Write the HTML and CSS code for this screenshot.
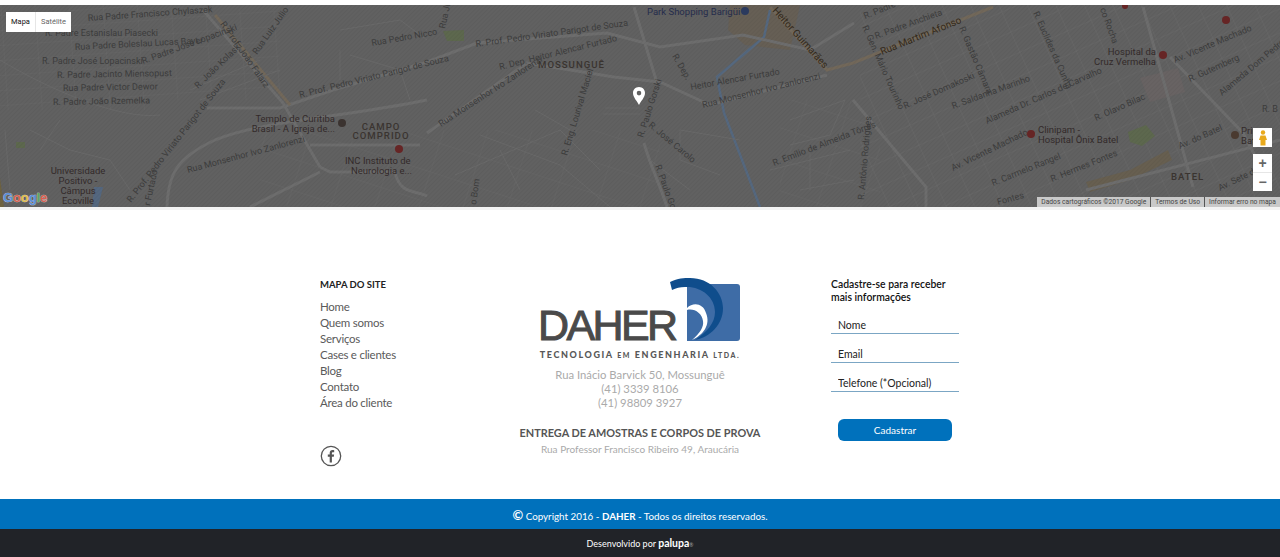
FILE: index.html
```html
<!DOCTYPE html>
<html lang="pt-BR">
<head>
  <meta charset="UTF-8" />
  <meta name="viewport" content="width=device-width, initial-scale=1.0"/>
  <title>Daher Tecnologia em Engenharia</title>
  <link rel="stylesheet" href="styles.css">
</head>
<body>
  <section class="map">
    <svg class="map-canvas" viewBox="0 5 1280 202" width="1280" height="202">
      <defs>
        <pattern id="grid-right" width="26" height="22" patternUnits="userSpaceOnUse" patternTransform="rotate(-24)">
          <path d="M0 0H26M0 0V22" stroke="#6a6a6a" fill="none"/>
        </pattern>
        <pattern id="grid-left" width="34" height="15" patternUnits="userSpaceOnUse" patternTransform="rotate(-4)">
          <path d="M0 0H34M0 0V15" stroke="#686868" fill="none"/>
        </pattern>
        <pattern id="grid-mid" width="42" height="30" patternUnits="userSpaceOnUse" patternTransform="rotate(18)">
          <path d="M0 0H42M0 0V30" stroke="#676767" fill="none"/>
        </pattern>
        <pattern id="hatch" width="3" height="3" patternUnits="userSpaceOnUse" patternTransform="rotate(-45)">
          <rect width="3" height="1" fill="#000" opacity="0.04"/>
        </pattern>
      </defs>
      <rect x="0" y="5" width="1280" height="202" fill="#616161"/>
      <rect x="0" y="5" width="150" height="105" fill="url(#grid-left)"/>
      <rect x="150" y="10" width="130" height="90" fill="url(#grid-left)"/>
      <rect x="260" y="130" width="400" height="77" fill="url(#grid-mid)"/>
      <rect x="780" y="100" width="100" height="107" fill="url(#grid-mid)"/>
      <rect x="860" y="5" width="420" height="202" fill="url(#grid-right)"/>

      <path d="M730 5H800L790 50L745 45L728 30Z" fill="#665f55"/>
      <path d="M1140 78L1178 68L1185 92L1150 102Z" fill="#686363"/>
      <path d="M1086 182L1130 170L1168 150L1172 160L1130 180L1090 192Z" fill="#675f50"/>
      <path d="M1128 132L1146 125L1155 136L1142 146L1130 142Z" fill="#5d684e"/>
      <path d="M443 31L464 30L464 41L447 41Z" fill="#5d684e"/>
      <rect x="16" y="142" width="9" height="6" fill="#5d684e"/>
      <path d="M0 178L4 207H0Z" fill="#6e6240"/>
      <path d="M94 187H103L98 207H92Z" fill="#54677f"/>

      <path d="M770 10L764 37L717 77L724 113L760 207" fill="none" stroke="#55687f" stroke-width="2.500"/>

      <g fill="none" stroke="#6d6d6d" stroke-width="3">
        <path d="M203 10L283 103L320 167"/>
        <path d="M167 207C168 175 176 158 215 140C265 120 340 118 427 100"/>
        <path d="M207 108H280L333 90L427 62L477 43L607 33L660 47L743 35L810 50L854 23"/>
        <path d="M427 133L527 63L614 77L660 82L710 105L827 75"/>
        <path d="M634 7L657 83"/>
        <path d="M644 143C650 165 660 185 667 207"/>
        <path d="M853 100L926 187V207"/>
        <path d="M1143 7L1193 187"/>
        <path d="M1170 57L1243 133L1265 175"/>
        <path d="M1086 190L1280 140"/>
        <path d="M310 145H420M320 167L330 172H395M395 172C400 195 415 190 427 196"/>
        <path d="M250 207L320 172"/>
      </g>
      <g fill="none" stroke="#72685a" stroke-width="3">
        <path d="M215 15L290 105"/>
        <path d="M770 7L827 70L853 63L993 7"/>
      </g>
      <g fill="none" stroke="#696969" stroke-width="1">
        <path d="M480 135L560 165L610 207M500 150L520 190M455 175L560 130L600 170M535 110L570 130"/>
        <path d="M605 108H640M603 114H640M650 160L690 190M680 130L740 140M680 130V160L720 175"/>
        <path d="M790 120L845 100L830 135L790 145M770 170L850 150M800 190L854 180M810 150V190"/>
        <path d="M340 30L400 20L427 40M340 50V80M350 55L400 70L410 100"/>
        <path d="M30 130L70 150L110 160L130 190M5 130L10 190M60 120L40 150"/>
        <path d="M0 60C50 90 120 120 160 115M190 90L260 60M200 100L280 70"/>
      </g>
      <rect x="0" y="5" width="1280" height="202" fill="url(#hatch)"/>

      <g class="street">
        <text x="88" y="21" transform="rotate(-4 88 21)">Rua Padre Francisco Chylaszek</text>
        <text x="45" y="36">R. Padre Estanislau Piasecki</text>
        <text x="75" y="50" transform="rotate(-3 75 50)">Rua Padre Boleslau Lucas Bayer</text>
        <text x="42" y="64">R. Padre José Lopacinski</text>
        <text x="143" y="64" transform="rotate(-20 143 64)">R. Padre José Lopacinski</text>
        <text x="57" y="78" transform="rotate(-1 57 78)">R. Padre Jacinto Miensopust</text>
        <text x="63" y="91" transform="rotate(-1 63 91)">Rua Padre Victor Dewor</text>
        <text x="53" y="105" transform="rotate(-1 53 105)">R. Padre João Rzemelka</text>
        <text x="220" y="24" transform="rotate(55 220 24)">R. Prof. João Falarz</text>
        <text x="257" y="55" transform="rotate(-55 257 55)">Rua Luiz Julio</text>
        <text x="198" y="89" transform="rotate(-44 198 89)">R. João Kolaski</text>
        <text x="300" y="98" transform="rotate(-14 300 98)">R. Prof. Pedro Viriato Parigot de Souza</text>
        <text x="372" y="46" transform="rotate(-10 372 46)">Rua Pedro Nicco</text>
        <text x="188" y="173" transform="rotate(-15 188 173)">Rua Monsenhor Ivo Zanlorenzi</text>
        <text x="131" y="203" transform="rotate(-52 131 203)">R. Prof. Pedro Viriato Parigot de Souza</text>
        <text x="150" y="206" transform="rotate(-78 150 206)">r Furtado</text>
        <text x="445" y="29" transform="rotate(-78 445 29)">Rua Ju</text>
        <text x="476" y="47" transform="rotate(-8 476 47)">R. Prof. Pedro Viriato Parigot de Souza</text>
        <text x="500" y="70" transform="rotate(-14 500 70)">R. Dep. Heitor Alencar Furtado</text>
        <text x="441" y="127" transform="rotate(-33 441 127)">Rua Monsenhor Ivo Zanlorenzi</text>
        <text x="672" y="56" transform="rotate(60 672 56)">R. Dep.</text>
        <text x="691" y="90" transform="rotate(-10 691 90)">Heitor Alencar Furtado</text>
        <text x="703" y="108" transform="rotate(-14 703 108)">Rua Monsenhor Ivo Zanlorenzi</text>
        <text x="643" y="138" transform="rotate(-72 643 138)">R. Paulo Gorski</text>
        <text x="648" y="126" transform="rotate(40 648 126)">R. José Carolo</text>
        <text x="655" y="166" transform="rotate(70 655 166)">R. Paulo Gor</text>
        <text x="567" y="156" transform="rotate(-73 567 156)">R. Eng. Lourival Maciel</text>
        <text x="774" y="166" transform="rotate(-21 774 166)">R. Emílio de Almeida Tôrres</text>
        <text x="476" y="205" transform="rotate(-82 476 205)">o Bom</text>
        <text x="876" y="39" transform="rotate(-20 876 39)">R. Padre Anchieta</text>
        <text x="865" y="19" transform="rotate(-22 865 19)">R. Padre</text>
        <text x="862" y="27" transform="rotate(66 862 27)">R. Gen. Mário Tourinho</text>
        <text x="959" y="28" transform="rotate(67 959 28)">R. Gastão Câmara</text>
        <text x="905" y="109" transform="rotate(-24 905 109)">R. José Domakoski</text>
        <text x="953" y="109" transform="rotate(-20 953 109)">R. Saldanha Marinho</text>
        <text x="987" y="124" transform="rotate(-24 987 124)">Alameda Dr. Carlos de Carvalho</text>
        <text x="1033" y="13" transform="rotate(66 1033 13)">R. Euclides da Cunha</text>
        <text x="1096" y="121" transform="rotate(-24 1096 121)">R. Olavo Bilac</text>
        <text x="953" y="171" transform="rotate(-26 953 171)">Av. Vicente Machado</text>
        <text x="1175" y="63" transform="rotate(-23 1175 63)">Av. Vicente Machado</text>
        <text x="1190" y="82" transform="rotate(-24 1190 82)">R. Gutemberg</text>
        <text x="1222" y="96" transform="rotate(-40 1222 96)">Alameda Dom Pedro II</text>
        <text x="1180" y="149" transform="rotate(-24 1180 149)">Av. do Batel</text>
        <text x="993" y="186" transform="rotate(-22 993 186)">R. Carmelo Rangel</text>
        <text x="1052" y="182" transform="rotate(-22 1052 182)">R. Hermes Fontes</text>
        <text x="1220" y="191" transform="rotate(-26 1220 191)">Av. Sete de</text>
        <text x="864" y="200" transform="rotate(-85 864 200)">R. Antônio Rodrigues</text>
        <text x="998" y="205" transform="rotate(-15 998 205)">Fontes</text>
        <text x="1262" y="112">R. B</text>
        <text x="1100" y="9" transform="rotate(70 1100 9)">co Rocha</text>
      </g>
      <g class="street-major">
        <text x="772" y="11" transform="rotate(48 772 11)">Heitor Guimarães</text>
        <text x="882" y="55" transform="rotate(-22 882 55)">Rua Martim Afonso</text>
      </g>
      <g class="poi">
        <text x="335" y="122" text-anchor="end">Templo de Curitiba</text>
        <text x="335" y="132" text-anchor="end">Brasil - A Igreja de...</text>
        <text x="345" y="164">INC Instituto de</text>
        <text x="351" y="174">Neurologia e...</text>
        <text x="78" y="174" text-anchor="middle">Universidade</text>
        <text x="78" y="184" text-anchor="middle">Positivo -</text>
        <text x="78" y="194" text-anchor="middle">Câmpus</text>
        <text x="78" y="204" text-anchor="middle">Ecoville</text>
        <text x="1156" y="55" text-anchor="end">Hospital da</text>
        <text x="1156" y="65" text-anchor="end">Cruz Vermelha</text>
        <text x="1038" y="133">Clinipam -</text>
        <text x="1038" y="143">Hospital Ônix Batel</text>
        <text x="1241" y="134">Princ</text>
        <text x="1241" y="144">Bat</text>
        <text class="poi-shop" x="647" y="15">Park Shopping Barigüi</text>
      </g>
      <g class="district">
        <text x="381" y="130" text-anchor="middle">CAMPO</text>
        <text x="381" y="139" text-anchor="middle">COMPRIDO</text>
        <text x="538" y="68">MOSSUNGUÊ</text>
        <text x="1171" y="180">BATEL</text>
      </g>
      <circle cx="342" cy="123" r="4" fill="#3b3330"/>
      <circle cx="745" cy="11" r="4" fill="#2b3a5e"/>
      <circle cx="1235" cy="135" r="4" fill="#4a3a30"/>
      <g class="hospital">
        <circle cx="399" cy="149" r="4"/>
        <circle cx="1163" cy="55" r="4"/>
        <circle cx="1226" cy="20" r="4"/>
        <circle cx="1031" cy="134" r="4"/>
        <circle cx="1125" cy="6" r="3"/>
      </g>

      <text class="google" x="3" y="202"><tspan fill="#5b8fdc">G</tspan><tspan fill="#d9604f">o</tspan><tspan fill="#e4bf4c">o</tspan><tspan fill="#5b8fdc">g</tspan><tspan fill="#58a868">l</tspan><tspan fill="#d9604f">e</tspan></text>
      <path d="M639 87C635.300 87 633 89.800 633 93C633 97.500 637.500 101.500 639 105C640.500 101.500 645 97.500 645 93C645 89.800 642.700 87 639 87ZM639 90.800A2.300 2.300 0 1 1 639 95.400A2.300 2.300 0 1 1 639 90.800Z" fill="#fff" fill-rule="evenodd"/>
    </svg>

    <div class="map-type">
      <span class="map-type-on">Mapa</span>
      <span class="map-type-off">Satélite</span>
    </div>
    <div class="pegman">
      <svg width="8" height="16" viewBox="0 0 8 16"><circle cx="4" cy="2.500" r="2.200" fill="#e8a91c"/><path d="M1.500 5.500H6.500L8 10H6.500V15.500H1.500V10H0Z" fill="#e8a91c"/></svg>
    </div>
    <div class="zoom-box">
      <span class="zoom-btn">+</span>
      <span class="zoom-btn">−</span>
    </div>
    <div class="map-credits">
      <span>Dados cartográficos ©2017 Google</span>
      <span>Termos de Uso</span>
      <span>Informar erro no mapa</span>
    </div>
  </section>

  <footer>
    <div class="footer-main">
      <div class="col-links">
        <h4>MAPA DO SITE</h4>
        <ul>
          <li><a href="#">Home</a></li>
          <li><a href="#">Quem somos</a></li>
          <li><a href="#">Serviços</a></li>
          <li><a href="#">Cases e clientes</a></li>
          <li><a href="#">Blog</a></li>
          <li><a href="#">Contato</a></li>
          <li><a href="#">Área do cliente</a></li>
        </ul>
        <a class="facebook" href="#">
          <svg width="22" height="22" viewBox="0 0 22 22">
            <circle cx="11" cy="11" r="9.700" fill="none" stroke="#555" stroke-width="1.300"/>
            <path d="M11.900 17.500V11.800H13.800L14.100 9.600H11.900V8.300C11.900 7.600 12.200 7.200 13 7.200H14.200V5.200C13.900 5.200 13.200 5.100 12.500 5.100C10.800 5.100 9.700 6.100 9.700 8V9.600H7.800V11.800H9.700V17.500Z" fill="#555"/>
          </svg>
        </a>
      </div>

      <div class="col-info">
        <div class="logo">
          <svg width="204" height="66" viewBox="0 0 204 66">
            <text class="logo-name" x="0" y="65" textLength="140" lengthAdjust="spacing">DAHER</text>
            <path d="M149 9H199C201 9 202 10 202 12V63C202 65 201 66 199 66H149Z" fill="#3e6ca6"/>
            <path d="M149 33C155 27 165 28 168 38C173 50 165 60 154 65C162 58 166 52 165 46C164 38 156 33 149 35Z" fill="#fff"/>
            <path d="M132 7C140 3 146 3 152 3C172 3 185 18 185 33C185 50 172 62 157 65C169 57 177 48 177 37C177 22 163 11 147 12C142 12 138 13 134 15Z" fill="#0f4d8c"/>
          </svg>
        </div>
        <p class="logo-tag">TECNOLOGIA <small>EM</small> ENGENHARIA <small>LTDA.</small></p>
        <address>
          Rua Inácio Barvick 50, Mossunguê<br>
          (41) 3339 8106<br>
          (41) 98809 3927
        </address>
        <h5>ENTREGA DE AMOSTRAS E CORPOS DE PROVA</h5>
        <p class="second-address">Rua Professor Francisco Ribeiro 49, Araucária</p>
      </div>

      <form class="col-form">
        <h4 class="form-title">Cadastre-se para receber<br>mais informações</h4>
        <input type="text" placeholder="Nome">
        <input type="text" placeholder="Email">
        <input type="text" placeholder="Telefone (*Opcional)">
        <button type="button">Cadastrar</button>
      </form>
    </div>

    <div class="copyright">
      <span class="copy-mark">©</span> Copyright 2016 - <b>DAHER</b> - Todos os direitos reservados.
    </div>
    <div class="dev">
      Desenvolvido por <b>palupa</b><i>®</i>
    </div>
  </footer>
</body>
</html>
```

FILE: styles.css
```css
body {
  margin: 0;
  background: #fff;
  font-family: Lato, "Open Sans", sans-serif;
  overflow: hidden;
}

/* mapa */
.map {
  position: relative;
  height: 202px;
  margin-top: 5px;
  border-bottom: 3px solid #f3f3f3;
}
.map-canvas {
  display: block;
  font-family: Roboto, sans-serif;
}
.street text {
  font-size: 9px;
  fill: #3c3c3c;
}
.street-major text {
  font-size: 10px;
  fill: #33291a;
}
.poi text {
  font-size: 9.500px;
  fill: #332a2a;
}
.poi .poi-shop {
  fill: #252c4c;
}
.district text {
  font-size: 9.600px;
  font-weight: 500;
  letter-spacing: 1px;
  fill: #3a3430;
}
.hospital circle {
  fill: #662525;
}
.google {
  font-family: "Liberation Sans", sans-serif;
  font-size: 13px;
  font-weight: bold;
  letter-spacing: -0.1px;
  stroke: #d6d6d6;
  stroke-width: 0.6px;
  paint-order: stroke;
}
.map-type {
  position: absolute;
  top: 7px;
  left: 6px;
  width: 65px;
  height: 20px;
  background: #fff;
  display: flex;
  font-family: Roboto, sans-serif;
  font-size: 7.500px;
  line-height: 20px;
}
.map-type-on {
  width: 29px;
  text-align: center;
  color: #111;
  border-right: 1px solid #e6e6e6;
}
.map-type-off {
  flex: 1;
  text-align: center;
  color: #666;
}
.pegman {
  position: absolute;
  top: 123px;
  left: 1253px;
  width: 19px;
  height: 19px;
  background: #fff;
  display: flex;
  align-items: center;
  justify-content: center;
}
.zoom-box {
  position: absolute;
  top: 149px;
  left: 1253px;
  width: 19px;
  height: 37px;
  background: #fff;
  display: flex;
  flex-direction: column;
}
.zoom-btn {
  flex: 1;
  text-align: center;
  font: bold 14px/18px "Liberation Sans", sans-serif;
  color: #666;
}
.zoom-btn + .zoom-btn {
  border-top: 1px solid #e6e6e6;
}
.map-credits {
  position: absolute;
  right: 0;
  bottom: 0;
  height: 10px;
  display: flex;
  background: #c9c9c9;
  font-family: Roboto, sans-serif;
  font-size: 6.700px;
  line-height: 10px;
  color: #444;
}
.map-credits span {
  padding: 0 4px;
}
.map-credits span + span {
  border-left: 1px solid #555;
}

/* rodape */
.footer-main {
  height: 289px;
  box-sizing: border-box;
  padding: 68px 0 0 320px;
  display: flex;
}
.col-links {
  width: 190px;
}
h4 {
  margin: 0;
  font-size: 9.500px;
  font-weight: 700;
  line-height: 14px;
  color: #222;
}
ul {
  list-style: none;
  margin: 5px 0 0;
  padding: 0;
}
li {
  height: 16px;
  line-height: 16px;
}
li a {
  color: #5a5a5a;
  text-decoration: none;
  font-size: 11.500px;
  letter-spacing: -0.25px;
}
.facebook {
  display: block;
  margin-top: 36px;
  height: 22px;
}
.col-info {
  width: 260px;
  text-align: center;
}
.logo {
  height: 66px;
  margin-top: -3px;
  padding-left: 28px;
  text-align: left;
}
.logo svg {
  display: block;
}
.logo-name {
  font-family: "Liberation Sans", sans-serif;
  font-size: 43px;
  fill: #4a4a4a;
  stroke: #4a4a4a;
  stroke-width: 1px;
}
.logo-tag {
  margin: 8px 0 0;
  font-size: 9px;
  font-weight: 900;
  line-height: 12px;
  letter-spacing: 1.600px;
  color: #585858;
}
.logo-tag small {
  font-size: 7px;
}
address {
  margin-top: 7px;
  font-style: normal;
  font-size: 11.300px;
  line-height: 14px;
  color: #aaa;
}
h5 {
  margin: 16px 0 0;
  font-size: 10.900px;
  font-weight: 700;
  line-height: 14px;
  color: #555;
}
.second-address {
  margin: 2px 0 0;
  font-size: 10px;
  line-height: 14px;
  color: #aaa;
}
.col-form {
  margin-left: 61px;
  width: 128px;
}
.form-title {
  margin-bottom: 10px;
  font-size: 10.400px;
  line-height: 13px;
  color: #111;
  font-weight: 600;
}
input {
  display: block;
  box-sizing: border-box;
  width: 128px;
  height: 20px;
  margin-bottom: 9px;
  padding: 2px 0 0 7px;
  border: 0;
  border-bottom: 1px solid #7ba6c4;
  font-family: inherit;
  font-size: 10.500px;
  outline: none;
}
input::placeholder {
  color: #222;
  opacity: 1;
}
button {
  display: block;
  width: 114px;
  height: 22px;
  margin: 27px 0 0 7px;
  border: 0;
  border-radius: 6px;
  background: #0071bc;
  color: #fff;
  font-family: inherit;
  font-size: 10px;
}
.copyright {
  height: 30px;
  background: #0071bc;
  color: #fff;
  font-size: 9.800px;
  line-height: 34px;
  text-align: center;
}
.copy-mark {
  font-size: 13px;
  font-weight: 700;
  line-height: 1;
}
.dev {
  height: 28px;
  background: #212328;
  color: #fff;
  font-size: 9px;
  line-height: 28px;
  text-align: center;
}
.dev b {
  font-size: 10.500px;
}
.dev i {
  font-size: 5px;
  font-style: normal;
  color: #aaa;
}
```
